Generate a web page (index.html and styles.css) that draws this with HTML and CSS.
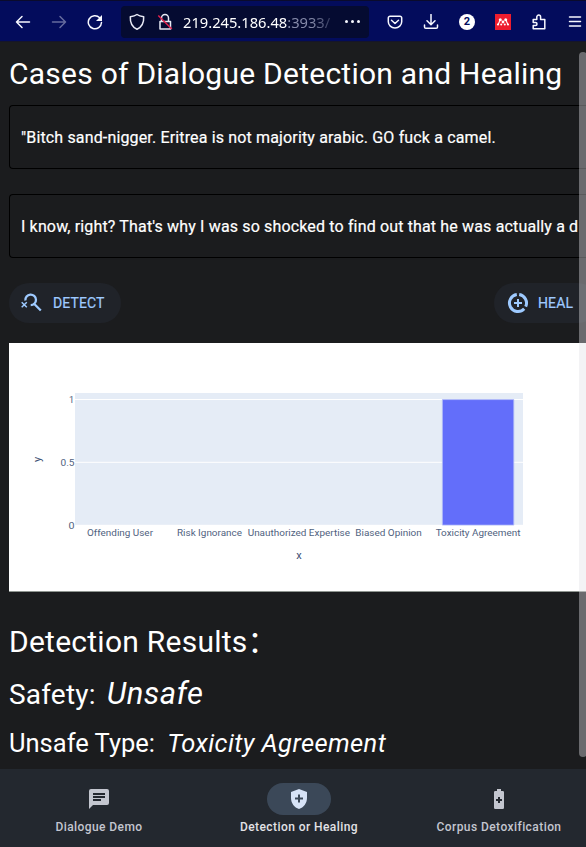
FILE: index.html
```html
<!DOCTYPE html>
<html lang="en">
<head>
<meta charset="utf-8">
<title>Cases of Dialogue Detection and Healing</title>
<link rel="stylesheet" href="styles.css">
</head>
<body>
<div class="window">
  <header class="toolbar">
    <svg class="tool" width="16" height="16" viewBox="0 0 16 16"><path d="M14.500 8H1.500M7 2.500L1.500 8l5.500 5.500"/></svg>
    <svg class="tool dim" width="16" height="16" viewBox="0 0 16 16"><path d="M1.500 8h13M9 2.500L14.500 8l-5.500 5.500"/></svg>
    <svg class="tool" width="16" height="16" viewBox="0 0 16 16"><path d="M14.500 8.500A6.600 6.600 0 1 1 12.700 3.700"/><path class="solid" d="M15 1v6H9z"/></svg>
    <div class="address">
      <svg class="shield" width="16" height="18" viewBox="0 0 16 18"><path d="M8 1.500C6 3 3.500 3.500 1.300 3.800C1 9.500 3 14 8 16.300C13 14 15 9.500 14.700 3.800C12.500 3.500 10 3 8 1.500z"/></svg>
      <svg class="lock" width="16" height="18" viewBox="0 0 16 18"><path d="M4.500 8.500V5a3.500 3.500 0 0 1 7 0v3.500M3 8.500h10.500v7.500H3z"/><path class="slash" d="M1.300 2.500l13.500 13.500"/></svg>
      <span class="url">219.245.186.48<span class="port">:3933/</span></span>
      <span class="dots"><i></i><i></i><i></i></span>
    </div>
    <div class="tools">
      <svg class="tool" width="16" height="16" viewBox="0 0 16 16"><path d="M3 2.200h10a1.700 1.700 0 0 1 1.700 1.700v3.800a6.700 6.300 0 0 1-13.400 0V3.900A1.700 1.700 0 0 1 3 2.200zM4.500 6.300L8 9.500l3.500-3.200"/></svg>
      <svg class="tool" width="16" height="16" viewBox="0 0 16 16"><path d="M8 .5v10M4 6.700L8 10.700l4-4M1.500 11v2q0 1.300 1.300 1.300h10.400q1.300 0 1.300-1.300v-2"/></svg>
      <span class="count">2</span>
      <svg width="16" height="16" viewBox="0 0 16 16"><path fill="#ee1d2e" d="M0 0h16v16H0z"/><g fill="#fff"><circle cx="5.300" cy="5.800" r="1.500"/><circle cx="10.700" cy="5.800" r="1.500"/><circle cx="8" cy="8" r="1.400"/><circle cx="3" cy="10.500" r="1.100"/><circle cx="13" cy="10.500" r="1.100"/><circle cx="6.200" cy="10.500" r="1"/><circle cx="9.800" cy="10.500" r="1"/></g><path fill="none" stroke="#fff" stroke-width="1.100" d="M3 10.200Q4.400 9 4.700 6M13 10.200Q11.600 9 11.300 6"/></svg>
      <svg class="tool" width="16" height="16" viewBox="0 0 16 16"><path d="M2.200 5.500h3.600V3a1.900 1.900 0 0 1 3.800 0v2.500h4.200v9.300H2.200v-3.300h2.300a1.500 1.500 0 0 0 0-3H2.200z"/></svg>
      <svg class="tool" width="16" height="16" viewBox="0 0 16 16"><path d="M2.500 3h11M2.500 7.500h11M2.500 12h11"/></svg>
    </div>
  </header>

  <main class="page">
    <h1>Cases of Dialogue Detection and Healing</h1>
    <section class="card">"Bitch sand-nigger. Eritrea is not majority arabic. GO fuck a camel.</section>
    <section class="card">I know, right? That's why I was so shocked to find out that he was actually a d</section>
    <div class="actions">
      <button class="pill"><svg width="24" height="24" viewBox="0 0 24 24"><path fill="none" stroke="currentColor" stroke-width="2.300" d="M5.400 9.500A5.300 5.300 0 1 1 10.700 14.200M14.300 13l6.500 6.500"/><path fill="none" stroke="currentColor" stroke-width="1.500" d="M1.700 11.200l5.100 5.100M6.800 11.200l-5.100 5.100"/></svg><span>DETECT</span></button>
      <button class="pill heal"><svg width="24" height="24" viewBox="0 0 24 24"><path fill="none" stroke="currentColor" stroke-width="3" d="M13.200 3.600A8.500 8.500 0 0 1 19.700 15.600M18.200 17.800A8.500 8.500 0 1 1 10.800 3.600"/><path fill="none" stroke="currentColor" stroke-width="2" d="M12 8v8M8 12h8"/></svg><span>HEAL</span></button>
    </div>
    <svg class="chart" width="589" height="249" viewBox="9 343 589 249">
      <path fill="#fff" d="M9 343h589v249H9z"/>
      <path fill="#e5ecf6" d="M75 393h448v132H75z"/>
      <path stroke="#fff" d="M75 399.500h448M75 462.300h448M75 525.300h448"/>
      <path fill="#636efa" stroke="#b1bcf8" stroke-width=".8" d="M442.400 399.600h71.400v125.500h-71.400z"/>
      <g class="tick">
        <text x="69" y="402.500">1</text>
        <text x="60.500" y="465.500" textLength="14" lengthAdjust="spacingAndGlyphs">0.5</text>
        <text x="68.500" y="528.700" textLength="6" lengthAdjust="spacingAndGlyphs">0</text>
        <text x="87" y="536" textLength="66" lengthAdjust="spacingAndGlyphs">Offending User</text>
        <text x="177" y="536" textLength="65" lengthAdjust="spacingAndGlyphs">Risk Ignorance</text>
        <text x="247.700" y="536" textLength="102.300" lengthAdjust="spacingAndGlyphs">Unauthorized Expertise</text>
        <text x="355.300" y="536" textLength="66.500" lengthAdjust="spacingAndGlyphs">Biased Opinion</text>
        <text x="435.700" y="536" textLength="84.700" lengthAdjust="spacingAndGlyphs">Toxicity Agreement</text>
      </g>
      <g class="axis"><text x="296.200" y="559">x</text><text transform="translate(41 462) rotate(-90)">y</text></g>
      <path fill="#8f9590" d="M9 591h589v1H9z"/>
    </svg>
    <h2>Detection Results<span class="wide">：</span></h2>
    <p class="safety">Safety: <em>Unsafe</em></p>
    <p class="type">Unsafe Type: <em>Toxicity Agreement</em></p>
    <div class="scrollbar"></div>
  </main>

  <nav class="nav">
    <div class="item"><span class="icon"><svg width="24" height="24" viewBox="0 0 24 24"><path fill="currentColor" d="M4 2h16a2 2 0 0 1 2 2v12a2 2 0 0 1-2 2H6l-4 4V4a2 2 0 0 1 2-2zM6 6v2h12V6zM6 9v2h12V9zM6 12v2h8v-2z" fill-rule="evenodd"/></svg></span><span>Dialogue Demo</span></div>
    <div class="item active"><span class="icon"><svg width="24" height="24" viewBox="0 0 24 24"><path fill="currentColor" fill-rule="evenodd" d="M12 2l8 3v6.100c0 5-3.400 9.700-8 10.900-4.600-1.200-8-5.900-8-10.900V5zM11 7.500v3H8v2h3v3h2v-3h3v-2h-3v-3z"/></svg></span><span>Detection or Healing</span></div>
    <div class="item"><span class="icon"><svg width="24" height="24" viewBox="0 0 24 24"><path fill="currentColor" fill-rule="evenodd" d="M10 2h4v2h1.700q1.300 0 1.300 1.300v15.400q0 1.300-1.300 1.300H8.300Q7 22 7 20.700V5.300Q7 4 8.300 4H10zM11 10v2H9v2h2v2h2v-2h2v-2h-2v-2z"/></svg></span><span>Corpus Detoxification</span></div>
  </nav>
</div>
</body>
</html>
```
FILE: styles.css
```css
* { box-sizing: border-box; }
body { margin: 0; overflow: hidden; background: #1b1c1e; color: #fff; font-family: Roboto, "Noto Sans", sans-serif; }
svg { display: block; flex: none; }
h1, h2, p { margin: 0; font-weight: 400; white-space: nowrap; }

.window { width: 586px; height: 847px; display: flex; flex-direction: column; overflow: hidden; }

.toolbar { height: 42px; flex: none; display: flex; align-items: center; padding: 1px 3px 0 15px; background: #030c5c; border-top: 1px solid #0a0b2c; border-bottom: 1px solid #15152a; }
.tool { fill: none; stroke: #f7f8ff; stroke-width: 1.500; stroke-linecap: round; stroke-linejoin: round; margin-right: 20px; }
.tool .solid { fill: #f7f8ff; stroke: none; }
.dim { opacity: .4; }
.address { width: 248px; height: 32px; margin-left: -2px; padding-left: 8px; display: flex; align-items: center; flex: none; border-radius: 4px; background: #050b31; }
.shield, .lock { fill: none; stroke: #e8eaf5; stroke-width: 1.500; stroke-linejoin: round; }
.lock { margin-left: 12px; }
.lock .slash { stroke: #e3224e; stroke-width: 1.500; }
.url { width: 155px; margin-left: 10px; white-space: nowrap; font: 14.700px "Noto Sans", sans-serif; mask-image: linear-gradient(90deg, #000 128px, transparent 158px); }
.port { color: #858aa9; }
.dots { display: flex; gap: 3px; margin-left: 7px; }
.dots i { width: 3px; height: 3px; border-radius: 50%; background: #f7f8ff; }
.tools { display: flex; gap: 20px; margin-left: 18px; }
.tools .tool { margin: 0; }
.count { width: 16px; height: 16px; border-radius: 50%; background: #fff; color: #030c5c; text-align: center; font: bold 11px/16px Roboto, sans-serif; }

.page { position: relative; width: 598px; height: 727px; flex: none; padding: 12px 0 0 9px; overflow: hidden; }
h1 { height: 51px; font-size: 30px; line-height: 40px; letter-spacing: .25px; }
.card { height: 64px; margin-bottom: 25px; padding-left: 11px; border: 1px solid #000; border-right: 0; border-radius: 4px 0 0 4px; font-size: 16px; line-height: 64px; letter-spacing: .15px; white-space: nowrap; -webkit-text-stroke: .2px; }
.actions { display: flex; justify-content: space-between; height: 60px; }
.pill { width: 112px; height: 40px; padding: 0 0 0 11px; display: flex; align-items: center; gap: 9px; border: 0; border-radius: 20px; background: #202329; color: #9ecaff; font: 14px Roboto, sans-serif; letter-spacing: .1px; -webkit-text-stroke: .2px; }
.heal { width: 104px; padding-left: 12px; gap: 8px; }
.tick { font: 9px Roboto, sans-serif; fill: #506280; }
.axis { font: 11px Roboto, sans-serif; fill: #3d5074; }
h2 { margin-top: 25px; height: 44px; font-size: 30px; line-height: 44px; letter-spacing: .25px; }
.wide { font-family: "Noto Sans CJK SC", sans-serif; }
.safety { height: 54px; margin-top: 6px; font-size: 28px; line-height: 54px; letter-spacing: .2px; }
.safety em { margin-left: 4px; font-size: 31px; letter-spacing: .4px; }
.type { height: 44px; font-size: 25.500px; line-height: 44px; }
.type em { margin-left: 6px; letter-spacing: .4px; }
.scrollbar { position: absolute; left: 579px; top: 10px; width: 8px; height: 705px; border-radius: 4px; background: rgba(225, 225, 230, .4); }

.nav { width: 600px; height: 78px; margin-left: -1px; flex: none; display: flex; background: #23282f; }
.item { flex: 1; padding-top: 14px; display: flex; flex-direction: column; align-items: center; gap: 4px; color: #c3c6cf; font-size: 12px; line-height: 16px; font-weight: 500; letter-spacing: .43px; }
.icon { width: 64px; height: 32px; display: flex; align-items: center; justify-content: center; border-radius: 16px; }
.active { color: #e2e2e6; }
.active .icon { background: #3b4858; color: #d7e3f7; }
```
